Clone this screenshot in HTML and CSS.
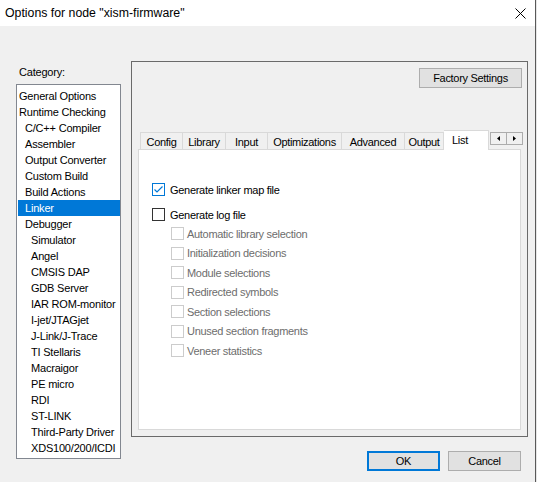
FILE: index.html
```html
<!DOCTYPE html>
<html>
<head>
<meta charset="utf-8">
<link rel="stylesheet" href="styles.css">
</head>
<body>
<div class="window">
  <div class="titlebar">
    <span class="title">Options for node "xism-firmware"</span>
    <svg class="close" width="11" height="11" viewBox="0 0 11 11"><path d="M0.5 0.5 L10.5 10.5 M10.5 0.5 L0.5 10.5" stroke="#000" stroke-width="1" fill="none"/></svg>
  </div>
  <div class="client">
    <div class="main">
      <div class="category">
        <div class="cat-label">Category:</div>
        <ul class="cat-list">
          <li class="l0">General Options</li>
          <li class="l0">Runtime Checking</li>
          <li class="l1">C/C++ Compiler</li>
          <li class="l1">Assembler</li>
          <li class="l1">Output Converter</li>
          <li class="l1">Custom Build</li>
          <li class="l1">Build Actions</li>
          <li class="l1 sel">Linker</li>
          <li class="l1">Debugger</li>
          <li class="l2">Simulator</li>
          <li class="l2">Angel</li>
          <li class="l2">CMSIS DAP</li>
          <li class="l2">GDB Server</li>
          <li class="l2">IAR ROM-monitor</li>
          <li class="l2">I-jet/JTAGjet</li>
          <li class="l2">J-Link/J-Trace</li>
          <li class="l2">TI Stellaris</li>
          <li class="l2">Macraigor</li>
          <li class="l2">PE micro</li>
          <li class="l2">RDI</li>
          <li class="l2">ST-LINK</li>
          <li class="l2">Third-Party Driver</li>
          <li class="l2">XDS100/200/ICDI</li>
        </ul>
      </div>
      <div class="panel">
        <div class="panel-top">
          <button class="btn factory">Factory Settings</button>
        </div>
        <div class="tabctl">
          <div class="tabstrip">
            <span class="tab">Config</span>
            <span class="tab">Library</span>
            <span class="tab">Input</span>
            <span class="tab">Optimizations</span>
            <span class="tab">Advanced</span>
            <span class="tab last">Output</span>
            <span class="tab active">List</span>
            <div class="scroller">
              <span class="sbtn"><svg width="3" height="5" viewBox="0 0 3 5"><polygon points="3,0 0,2.5 3,5" fill="#000"/></svg></span>
              <span class="sbtn"><svg width="3" height="5" viewBox="0 0 3 5"><polygon points="0,0 3,2.5 0,5" fill="#000"/></svg></span>
            </div>
          </div>
          <div class="tabpage">
            <div class="opt main-opt first">
              <span class="cb checked"><svg width="11" height="11" viewBox="0 0 11 11"><path d="M1.5 5.5 L4 8 L9.5 2.5" stroke="#0078d7" stroke-width="1.2" fill="none"/></svg></span>
              <span class="lbl">Generate linker map file</span>
            </div>
            <div class="opt main-opt second">
              <span class="cb"></span>
              <span class="lbl">Generate log file</span>
            </div>
            <div class="opt sub">
              <span class="cb dis"></span>
              <span class="lbl">Automatic library selection</span>
            </div>
            <div class="opt sub">
              <span class="cb dis"></span>
              <span class="lbl">Initialization decisions</span>
            </div>
            <div class="opt sub">
              <span class="cb dis"></span>
              <span class="lbl">Module selections</span>
            </div>
            <div class="opt sub">
              <span class="cb dis"></span>
              <span class="lbl">Redirected symbols</span>
            </div>
            <div class="opt sub">
              <span class="cb dis"></span>
              <span class="lbl">Section selections</span>
            </div>
            <div class="opt sub">
              <span class="cb dis"></span>
              <span class="lbl">Unused section fragments</span>
            </div>
            <div class="opt sub">
              <span class="cb dis"></span>
              <span class="lbl">Veneer statistics</span>
            </div>
          </div>
        </div>
      </div>
    </div>
    <div class="footer">
      <button class="btn dlg default">OK</button>
      <button class="btn dlg">Cancel</button>
    </div>
  </div>
</div>
</body>
</html>
```

FILE: styles.css
```css
* {
  box-sizing: border-box;
  margin: 0;
  padding: 0;
}

body {
  width: 537px;
  height: 482px;
  overflow: hidden;
  background: #e6e6e6;
  font-family: "Liberation Sans", Arial, sans-serif;
  font-size: 11px;
  color: #000;
}

.window {
  width: 536px;
  height: 482px;
  border-right: 1px solid #595959;
  background: #f0f0f0;
  display: flex;
  flex-direction: column;
}

.titlebar {
  height: 26px;
  flex: none;
  background: #fff;
  display: flex;
  align-items: center;
  padding-left: 5px;
}

.title {
  font-size: 12.3px;
  white-space: nowrap;
}

.close {
  margin-left: auto;
  margin-right: 9px;
  display: block;
}

.client {
  flex: 1;
  padding: 35px 0 0 16px;
  display: flex;
  flex-direction: column;
}

.main {
  display: flex;
  align-items: flex-start;
  height: 376px;
}

.category {
  width: 105px;
  padding-top: 4px;
}

.cat-label {
  height: 14px;
  line-height: 14px;
  padding-left: 3px;
  margin-bottom: 5px;
  letter-spacing: -0.2px;
}

.cat-list {
  list-style: none;
  width: 105px;
  height: 375px;
  background: #fff;
  border: 1px solid #828790;
  padding: 3px 0 0 1px;
  letter-spacing: -0.2px;
}

.cat-list li {
  height: 16px;
  line-height: 16px;
  white-space: nowrap;
}

.cat-list .l0 { padding-left: 1px; }
.cat-list .l1 { padding-left: 7px; }
.cat-list .l2 { padding-left: 13px; }

.cat-list .sel {
  background: #0078d7;
  color: #fff;
}

.panel {
  margin-left: 10px;
  width: 397px;
  height: 376px;
  border: 1px solid #6a6a6a;
  padding: 6px;
  display: flex;
  flex-direction: column;
}

.panel-top {
  display: flex;
  justify-content: flex-end;
  margin-right: -1px;
}

.btn {
  font-family: "Liberation Sans", Arial, sans-serif;
  font-size: 11px;
  letter-spacing: -0.3px;
  color: #000;
  background: #e1e1e1;
  border: 1px solid #adadad;
  height: 20px;
  line-height: 18px;
  text-align: center;
  display: block;
}

.factory {
  width: 103px;
}

.tabctl {
  margin-top: 42px;
  flex: 1;
  display: flex;
  flex-direction: column;
}

.tabstrip {
  height: 19px;
  padding-left: 2px;
  display: grid;
  grid-template-columns: 42px 43px 42px 74px 63px 40px 45px 1fr;
  align-items: end;
  position: relative;
  z-index: 1;
  letter-spacing: -0.3px;
}

.tab {
  height: 17px;
  padding-top: 2px;
  line-height: 15px;
  text-align: center;
  white-space: nowrap;
  border-top: 1px solid #d9d9d9;
  border-left: 1px solid #d9d9d9;
  background: #f0f0f0;
}

.tab.last {
  border-right: 1px solid #d9d9d9;
}

.tab.active {
  height: 20px;
  margin-bottom: -1px;
  background: #fff;
  border-left: none;
  border-right: 1px solid #d9d9d9;
  text-align: left;
  padding-left: 8px;
}

.scroller {
  align-self: start;
  justify-self: end;
  margin-top: 2px;
  margin-right: -2px;
  width: 33px;
  height: 13px;
  display: flex;
  border: 1px solid #acacac;
  background: #f0f0f0;
}

.sbtn {
  flex: 1;
  display: flex;
  align-items: center;
  justify-content: center;
}

.sbtn + .sbtn {
  border-left: 1px solid #acacac;
}

.sbtn svg {
  display: block;
}

.tabpage {
  flex: 1;
  background: #fff;
  border: 1px solid #d9d9d9;
  padding: 33px 0 0 13px;
  display: flex;
  flex-direction: column;
  letter-spacing: -0.3px;
}

.opt {
  display: flex;
  align-items: center;
  height: 13px;
  white-space: nowrap;
}

.opt.second {
  margin-top: 12px;
}

.opt.sub {
  margin-top: 6.5px;
  margin-left: 19px;
  color: #6d6d6d;
}

.opt.second + .opt.sub {
  margin-top: 6px;
}

.cb {
  width: 13px;
  height: 13px;
  flex: none;
  border: 1px solid #333;
  background: #fff;
  display: flex;
  align-items: center;
  justify-content: center;
}

.cb.checked {
  border-color: #0078d7;
}

.cb.dis {
  border-color: #cccccc;
}

.lbl {
  margin-left: 5px;
}

.sub .lbl {
  margin-left: 3px;
}

.footer {
  margin-top: 14px;
  padding-right: 14px;
  display: flex;
  justify-content: flex-end;
  gap: 8px;
}

.dlg {
  width: 73px;
}

.dlg.default {
  border: 2px solid #0078d7;
  line-height: 16px;
}
```
